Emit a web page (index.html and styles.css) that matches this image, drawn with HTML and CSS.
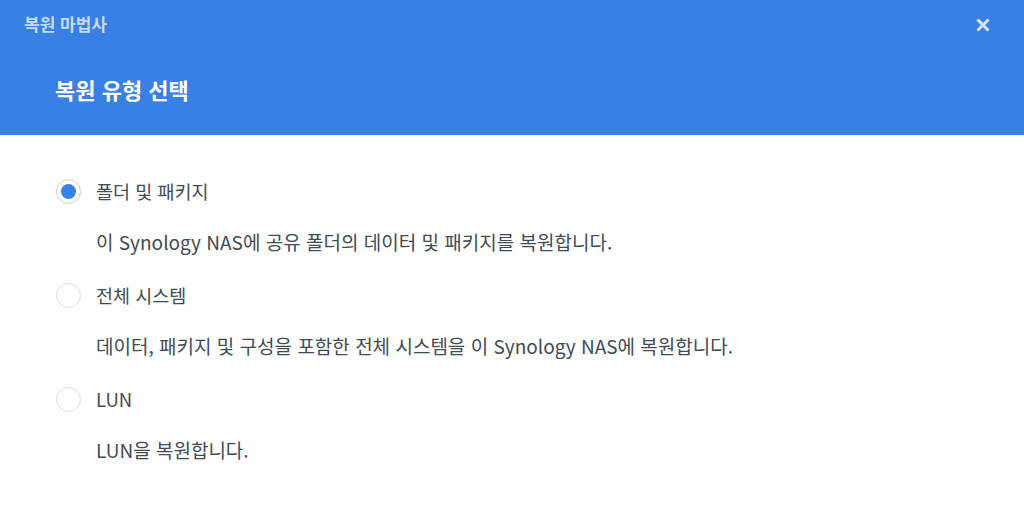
FILE: index.html
```html
<!DOCTYPE html>
<html lang="ko">
<head>
<meta charset="utf-8">
<link rel="stylesheet" href="styles.css">
</head>
<body>
<div class="dialog">
  <header class="header">
    <div class="titlebar">
      <span class="title">복원 마법사</span>
      <button class="close" aria-label="닫기">
        <svg width="16" height="16" viewBox="0 0 16 16"><path d="M2.5 2.5 L13.5 13.5 M13.5 2.5 L2.5 13.5" stroke="#d6e4f9" stroke-width="3" stroke-linecap="butt" fill="none"/></svg>
      </button>
    </div>
    <h1 class="heading">복원 유형 선택</h1>
  </header>
  <main class="body">
    <div class="option">
      <div class="row">
        <span class="radio checked"></span>
        <span class="label">폴더 및 패키지</span>
      </div>
      <p class="desc">이 Synology NAS에 공유 폴더의 데이터 및 패키지를 복원합니다.</p>
    </div>
    <div class="option">
      <div class="row">
        <span class="radio"></span>
        <span class="label">전체 시스템</span>
      </div>
      <p class="desc">데이터, 패키지 및 구성을 포함한 전체 시스템을 이 Synology NAS에 복원합니다.</p>
    </div>
    <div class="option">
      <div class="row">
        <span class="radio"></span>
        <span class="label">LUN</span>
      </div>
      <p class="desc">LUN을 복원합니다.</p>
    </div>
  </main>
</div>
</body>
</html>
```

FILE: styles.css
```css
* { box-sizing: border-box; }
html, body {
  margin: 0;
  padding: 0;
  background: #ffffff;
  font-family: "Noto Sans CJK KR", sans-serif;
}
.dialog {
  width: 1024px;
  height: 505px;
  display: flex;
  flex-direction: column;
}
.header {
  background: #3880e4;
  height: 135px;
  display: flex;
  flex-direction: column;
}
.titlebar {
  height: 50px;
  display: flex;
  align-items: center;
  justify-content: space-between;
  padding: 0 33px 0 24px;
}
.title {
  color: rgba(255,255,255,0.72);
  font-size: 17px;
  font-weight: bold;
  margin-top: -3px;
}
.close {
  border: 0;
  background: transparent;
  padding: 0;
  width: 16px;
  height: 16px;
  display: flex;
}
.heading {
  margin: 16px 0 0 55px;
  color: #ffffff;
  font-size: 22px;
  font-weight: bold;
  line-height: 46px;
}
.body {
  padding: 44px 0 0 56px;
  display: flex;
  flex-direction: column;
}
.option {
  display: flex;
  flex-direction: column;
}
.row {
  display: flex;
  align-items: center;
  height: 24px;
  gap: 15px;
}
.radio {
  width: 25px;
  height: 25px;
  border-radius: 50%;
  border: 1px solid #d9dfe6;
  background: #fff;
  flex: none;
  position: relative;
}
.radio.checked {
  border-color: #c6ccd4;
}
.radio.checked::after {
  content: "";
  position: absolute;
  left: 4px;
  top: 4px;
  width: 15px;
  height: 15px;
  border-radius: 50%;
  background: #3880e4;
}
.label {
  color: #414b55;
  font-size: 18.5px;
}
.desc {
  margin: 29px 0 31px 40px;
  color: #414b55;
  font-size: 19px;
  line-height: 20px;
}
```
